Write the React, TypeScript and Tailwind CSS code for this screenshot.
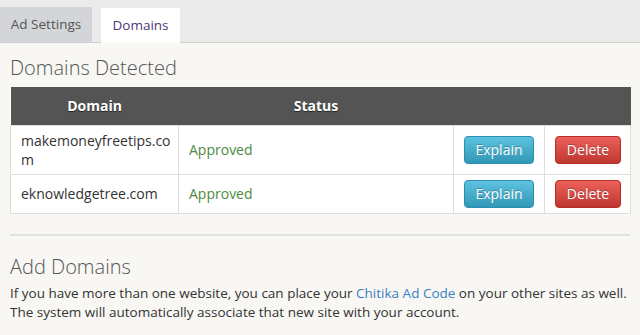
import React from 'react';

const rows = [
  { domain: 'makemoneyfreetips.com', status: 'Approved' },
  { domain: 'eknowledgetree.com', status: 'Approved' },
];

export default function App() {
  return (
    <div className="w-[640px] h-[335px] overflow-hidden bg-[#f8f7f4] text-[#333] font-['Open_Sans',sans-serif]">
      <div className="h-[43px] bg-[#ebebeb] border-b border-[#cfcfcf] flex items-end gap-[9px]">
        <div className="w-[92px] h-[35px] bg-[#d3d5d8] text-[#555] text-[13.5px] flex items-center justify-center">Ad Settings</div>
        <div className="w-[79px] h-[35px] bg-white text-[#4f3579] text-[13.5px] flex items-center justify-center -mb-px">Domains</div>
      </div>

      <div className="px-[10px]">
        <h2 className="text-[20px] font-light text-[#555] leading-[24px] mt-[13px] mb-[7px]">Domains Detected</h2>

        <table className="w-[620px] table-fixed border-collapse bg-white text-[14px]">
          <colgroup>
            <col className="w-[168px]" />
            <col className="w-[275px]" />
            <col className="w-[91px]" />
            <col className="w-[86px]" />
          </colgroup>
          <thead>
            <tr className="bg-[#545454] h-[38px]">
              <th className="text-white font-bold text-[14px] [text-shadow:0_1px_1px_rgba(0,0,0,0.6)]">Domain</th>
              <th className="text-white font-bold text-[14px] [text-shadow:0_1px_1px_rgba(0,0,0,0.6)]">Status</th>
              <th />
              <th />
            </tr>
          </thead>
          <tbody>
            {rows.map((r) => (
              <tr key={r.domain}>
                <td className="border border-[#dedede] pl-[10px] pr-[5px] py-[5px] leading-[19px] break-all align-middle">{r.domain}</td>
                <td className="border border-[#dedede] px-[10px] text-[#4e8a3e] align-middle">{r.status}</td>
                <td className="border border-[#dedede] px-[10px] py-[5px] align-middle">
                  <button className="w-[70px] h-[28px] rounded-[4px] border border-[#2b8fb0] bg-gradient-to-b from-[#5ec3e0] to-[#2f97b5] text-white text-[14px] leading-none [text-shadow:0_-1px_0_rgba(0,0,0,0.25)]">Explain</button>
                </td>
                <td className="border border-[#dedede] px-[10px] py-[5px] align-middle">
                  <button className="w-[66px] h-[28px] rounded-[4px] border border-[#b3302a] bg-gradient-to-b from-[#ee605b] to-[#bd372f] text-white text-[14px] leading-none [text-shadow:0_-1px_0_rgba(0,0,0,0.25)]">Delete</button>
                </td>
              </tr>
            ))}
          </tbody>
        </table>

        <div className="mt-[20px] border-t-2 border-[#e2e2e0]" />

        <h2 className="text-[20px] font-light text-[#555] leading-[24px] mt-[19px] mb-[5px]">Add Domains</h2>
        <p className="text-[13.5px] leading-[19px] text-[#333] whitespace-nowrap">
          If you have more than one website, you can place your <span className="text-[#3a7fbf]">Chitika Ad Code</span> on your other sites as well.
          <br />
          The system will automatically associate that new site with your account.
        </p>
      </div>
    </div>
  );
}
